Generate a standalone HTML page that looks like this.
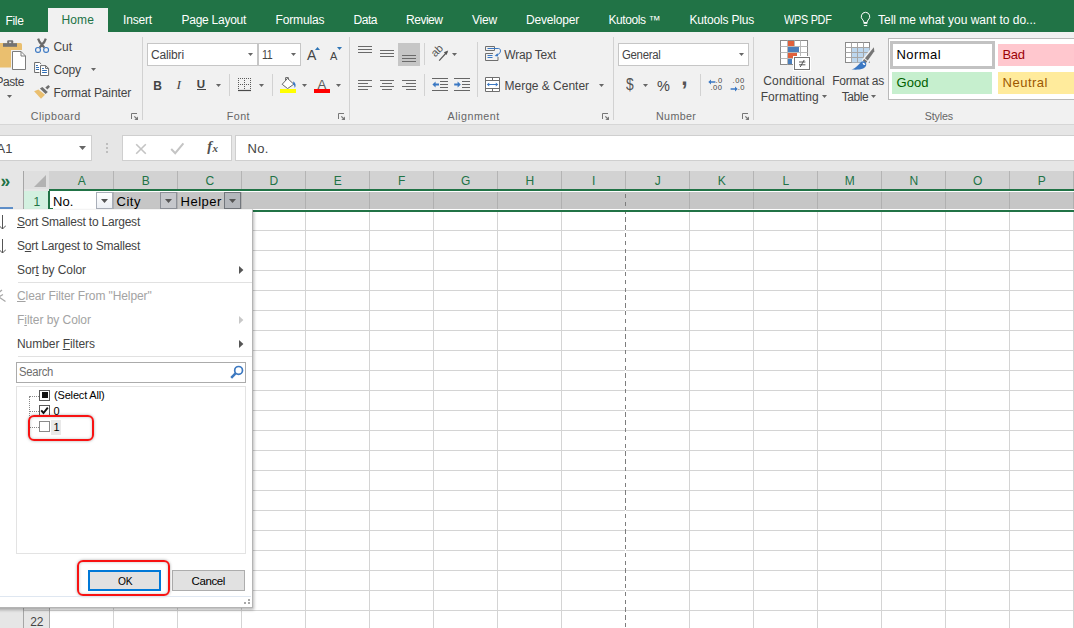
<!DOCTYPE html>
<html>
<head>
<meta charset="utf-8">
<title>Excel</title>
<style>
html,body{margin:0;padding:0;}
body{width:1074px;height:628px;overflow:hidden;position:relative;background:#fff;font-family:"Liberation Sans",sans-serif;font-size:12px;color:#444;}
.a{position:absolute;display:block;}
.t{position:absolute;white-space:nowrap;line-height:1;}
u{text-decoration:underline;text-underline-offset:1px;}

</style>
</head>
<body>
<div class="a" style="left:0px;top:0px;width:1074px;height:32px;background:#217346;"></div>
<div class="a" style="left:48px;top:8px;width:60px;height:24px;background:#f1f1f1;"></div>
<span class="t" style="left:5.5px;top:14.75px;font-size:12px;color:#fff;letter-spacing:-0.34px;">File</span>
<span class="t" style="left:61.5px;top:13.75px;font-size:12px;color:#217346;letter-spacing:0.12px;">Home</span>
<span class="t" style="left:123px;top:13.75px;font-size:12px;color:#fff;letter-spacing:-0.17px;">Insert</span>
<span class="t" style="left:181.5px;top:13.75px;font-size:12px;color:#fff;letter-spacing:-0.26px;">Page Layout</span>
<span class="t" style="left:275.5px;top:13.75px;font-size:12px;color:#fff;letter-spacing:-0.13px;">Formulas</span>
<span class="t" style="left:353.5px;top:13.75px;font-size:12px;color:#fff;letter-spacing:-0.46px;">Data</span>
<span class="t" style="left:406px;top:13.75px;font-size:12px;color:#fff;letter-spacing:-0.48px;">Review</span>
<span class="t" style="left:472px;top:13.75px;font-size:12px;color:#fff;letter-spacing:-0.2px;">View</span>
<span class="t" style="left:526px;top:13.75px;font-size:12px;color:#fff;letter-spacing:-0.19px;">Developer</span>
<span class="t" style="left:608.5px;top:13.75px;font-size:12px;color:#fff;letter-spacing:-0.43px;">Kutools ™</span>
<span class="t" style="left:689.5px;top:13.75px;font-size:12px;color:#fff;letter-spacing:-0.18px;">Kutools Plus</span>
<span class="t" style="left:783.5px;top:13.75px;font-size:12px;color:#fff;letter-spacing:-0.3px;transform:scaleX(0.904);transform-origin:0 0;">WPS PDF</span>
<span class="t" style="left:878px;top:13.75px;font-size:12px;color:#fff;">Tell me what you want to do...</span>
<svg class="a" style="left:860px;top:11px" width="11" height="16" viewBox="0 0 11 16"><path d="M5.5 1.3a4.3 4.3 0 0 0-2.7 7.6c.7.7 1 1.5 1.1 2.6h3.2c.1-1.1.4-1.9 1.1-2.6A4.3 4.3 0 0 0 5.5 1.3z" fill="none" stroke="#fff" stroke-width="1"/><path d="M3.6 12.1h3.8" stroke="#fff" stroke-width="1.5"/><path d="M3.8 14.6h3.4" stroke="#fff" stroke-width="1"/></svg>
<div class="a" style="left:0px;top:32px;width:1074px;height:92px;background:#f1f1f1;"></div>
<div class="a" style="left:0px;top:124px;width:1074px;height:1px;background:#d6d6d6;"></div>
<div class="a" style="left:142px;top:37px;width:1px;height:83px;background:#d2d2d2;"></div>
<div class="a" style="left:349px;top:37px;width:1px;height:83px;background:#d2d2d2;"></div>
<div class="a" style="left:613px;top:37px;width:1px;height:83px;background:#d2d2d2;"></div>
<div class="a" style="left:753px;top:37px;width:1px;height:83px;background:#d2d2d2;"></div>
<span class="t" style="left:30.8px;top:111.0px;font-size:10.7px;color:#666;letter-spacing:0.45px;">Clipboard</span>
<span class="t" style="left:226.8px;top:111.0px;font-size:10.7px;color:#666;letter-spacing:0.45px;">Font</span>
<span class="t" style="left:447.5px;top:111.0px;font-size:10.7px;color:#666;letter-spacing:0.53px;">Alignment</span>
<span class="t" style="left:656px;top:111.0px;font-size:10.7px;color:#666;letter-spacing:0.36px;">Number</span>
<span class="t" style="left:924.8px;top:111.0px;font-size:10.7px;color:#666;letter-spacing:-0.15px;">Styles</span>
<svg class="a" style="left:131px;top:113px" width="8" height="8" viewBox="0 0 8 8"><path d="M.5 6V.5H6" fill="none" stroke="#777" stroke-width="1"/><path d="M3.3 3.3L6 6" fill="none" stroke="#777" stroke-width="1.2"/><path d="M7 3.4V7H3.4Z" fill="#777"/></svg>
<svg class="a" style="left:338px;top:113px" width="8" height="8" viewBox="0 0 8 8"><path d="M.5 6V.5H6" fill="none" stroke="#777" stroke-width="1"/><path d="M3.3 3.3L6 6" fill="none" stroke="#777" stroke-width="1.2"/><path d="M7 3.4V7H3.4Z" fill="#777"/></svg>
<svg class="a" style="left:602px;top:113px" width="8" height="8" viewBox="0 0 8 8"><path d="M.5 6V.5H6" fill="none" stroke="#777" stroke-width="1"/><path d="M3.3 3.3L6 6" fill="none" stroke="#777" stroke-width="1.2"/><path d="M7 3.4V7H3.4Z" fill="#777"/></svg>
<svg class="a" style="left:742px;top:113px" width="8" height="8" viewBox="0 0 8 8"><path d="M.5 6V.5H6" fill="none" stroke="#777" stroke-width="1"/><path d="M3.3 3.3L6 6" fill="none" stroke="#777" stroke-width="1.2"/><path d="M7 3.4V7H3.4Z" fill="#777"/></svg>
<svg class="a" style="left:0px;top:40px" width="27" height="31" viewBox="0 0 27 31"><rect x="-3" y="3" width="25" height="24.5" rx="1.5" fill="#eabf6f"/><rect x="7.2" y="0.2" width="6" height="4" rx="1" fill="#737373"/><rect x="9.1" y="1.7" width="2.1" height="1.8" fill="#e2e2e2"/><rect x="3" y="3.2" width="14" height="3.6" fill="#737373"/><rect x="11" y="10" width="17" height="21" fill="#f1f1f1"/><path d="M12.5 11.5H21L25.5 16V29.5H12.5Z" fill="#fff" stroke="#7d7d7d" stroke-width="1"/><path d="M21 11.5V16H25.5" fill="none" stroke="#7d7d7d" stroke-width="1"/></svg>
<svg class="a" style="left:33px;top:38px" width="18" height="16" viewBox="0 0 18 16"><path d="M5.1 .6Q6.2 4.2 8.9 6.6L11.3 9.7M12.8 .6Q11.8 4.2 8.9 6.6L6.7 9.7" stroke="#6a6a6a" stroke-width="2.2" fill="none"/><circle cx="5" cy="11.9" r="2.45" fill="none" stroke="#3b78c3" stroke-width="1.15"/><circle cx="13.1" cy="11.9" r="2.45" fill="none" stroke="#3b78c3" stroke-width="1.15"/></svg>
<svg class="a" style="left:33px;top:61px" width="18" height="16" viewBox="0 0 18 16"><path d="M1.6 1.5H6.6L8.4 3.2V11.5H1.6Z" fill="#fff"/><path d="M6.4 11.5H1.6V1.5H6.6L8.2 3" fill="none" stroke="#6a6a6a" stroke-width="1"/><path d="M3 4.5H4.9M3 6.5H6M3 8.5H6" stroke="#2e6db5" stroke-width="1"/><path d="M7.5 4.6H12.6L15.6 7.4V14.5H7.5Z" fill="#fff" stroke="#6a6a6a" stroke-width="1"/><path d="M12.6 4.6V7.4H15.6" fill="none" stroke="#6a6a6a" stroke-width="1"/><path d="M9.1 7.5H10.9M9.1 9.5H13.9M9.1 11.5H13.9" stroke="#2e6db5" stroke-width="1"/></svg>
<svg class="a" style="left:33px;top:84px" width="18" height="16" viewBox="0 0 18 16"><path d="M1.1 7.2L5.4 5.6L12 10.7L8 14.7Z" fill="#eabf6f"/><path d="M6.9 4.4L9.4 2.9L14.8 7.9L12.6 9.9Z" fill="#6f6f6f"/><path d="M12.3 3.6L15.3 .9L17 2.8L14.4 5.6Z" fill="#6f6f6f"/></svg>
<span class="t" style="left:-4.5px;top:76.25px;font-size:12px;color:#444;letter-spacing:-0.44px;">Paste</span>
<svg class="a" style="left:7px;top:95px" width="5" height="3" viewBox="0 0 5 3"><path d="M0 0H5L2.5 3Z" fill="#666"/></svg>
<span class="t" style="left:53.5px;top:40.75px;font-size:12px;color:#444;letter-spacing:-0.06px;">Cut</span>
<span class="t" style="left:53.5px;top:63.75px;font-size:12px;color:#444;letter-spacing:-0.13px;">Copy</span>
<svg class="a" style="left:91px;top:68px" width="5" height="3" viewBox="0 0 5 3"><path d="M0 0H5L2.5 3Z" fill="#666"/></svg>
<span class="t" style="left:53.5px;top:86.75px;font-size:12px;color:#444;letter-spacing:-0.13px;">Format Painter</span>
<div class="a" style="left:147px;top:43px;width:111px;height:23px;background:#fff;border:1px solid #c6c6c6;box-sizing:border-box;"></div>
<div class="a" style="left:258px;top:43px;width:43px;height:23px;background:#fff;border:1px solid #c6c6c6;box-sizing:border-box;"></div>
<span class="t" style="left:151px;top:48.75px;font-size:12px;color:#444;letter-spacing:-0.15px;">Calibri</span>
<span class="t" style="left:261.5px;top:48.75px;font-size:12px;color:#444;letter-spacing:-0.3px;transform:scaleX(0.885);transform-origin:0 0;">11</span>
<svg class="a" style="left:248px;top:53px" width="5" height="3" viewBox="0 0 5 3"><path d="M0 0H5L2.5 3Z" fill="#666"/></svg>
<svg class="a" style="left:291px;top:53px" width="5" height="3" viewBox="0 0 5 3"><path d="M0 0H5L2.5 3Z" fill="#666"/></svg>
<span class="t" style="left:307px;top:47.75px;font-size:14px;color:#444;letter-spacing:0.66px;">A</span>
<span class="t" style="left:330px;top:51.0px;font-size:11px;color:#444;letter-spacing:0.16px;">A</span>
<svg class="a" style="left:315px;top:47px" width="5" height="3" viewBox="0 0 5 3"><path d="M0 3L2.5 0L5 3Z" fill="#2e75b6"/></svg>
<svg class="a" style="left:337px;top:47px" width="5" height="3" viewBox="0 0 5 3"><path d="M0 0H5L2.5 3Z" fill="#2e75b6"/></svg>
<span class="t" style="left:153.3px;top:79.5px;font-size:12px;color:#444;font-weight:bold;">B</span>
<span class="t" style="left:176.5px;top:77.5px;font-size:13.5px;color:#444;font-style:italic;font-family:&quot;Liberation Serif&quot;,serif;">I</span>
<span class="t" style="left:196.8px;top:79.0px;font-size:11.5px;color:#444;font-weight:bold;">U</span>
<div class="a" style="left:197px;top:89px;width:9px;height:1.4px;background:#444;"></div>
<svg class="a" style="left:216px;top:84px" width="5" height="3" viewBox="0 0 5 3"><path d="M0 0H5L2.5 3Z" fill="#666"/></svg>
<div class="a" style="left:229px;top:74px;width:1px;height:22px;background:#d2d2d2;"></div>
<svg class="a" style="left:259px;top:84px" width="5" height="3" viewBox="0 0 5 3"><path d="M0 0H5L2.5 3Z" fill="#666"/></svg>
<div class="a" style="left:272px;top:74px;width:1px;height:22px;background:#d2d2d2;"></div>
<svg class="a" style="left:302px;top:84px" width="5" height="3" viewBox="0 0 5 3"><path d="M0 0H5L2.5 3Z" fill="#666"/></svg>
<svg class="a" style="left:336px;top:84px" width="5" height="3" viewBox="0 0 5 3"><path d="M0 0H5L2.5 3Z" fill="#666"/></svg>
<svg class="a" style="left:237px;top:77px" width="15" height="15" viewBox="0 0 15 15"><path d="M1 1.5H14M1 7.5H14M1.5 1V13M7.5 1V13M13.5 1V13" stroke="#5a5a5a" stroke-width="1" stroke-dasharray="1 1" fill="none" shape-rendering="crispEdges"/><path d="M1 13.5H14" stroke="#4a4a4a" stroke-width="1.2"/></svg>
<svg class="a" style="left:279px;top:76px" width="18" height="14" viewBox="0 0 18 14"><path d="M8.5 2.4L14.8 8.2L8.6 12.6L3.2 8.3Z" fill="#fff" stroke="#666" stroke-width="1"/><path d="M6.6 4.6V1.6H9.4V3.4" fill="none" stroke="#666" stroke-width="1"/><path d="M14.4 5.2C16.6 7 17.4 9.4 15.8 12C15.4 10.4 15.4 9 14 8.2Z" fill="#3b78c3"/></svg>
<div class="a" style="left:280px;top:89px;width:16px;height:4px;background:#ffff00;"></div>
<div class="a" style="left:314px;top:89px;width:16px;height:4px;background:#ff0000;"></div>
<span class="t" style="left:317.5px;top:77.75px;font-size:13.2px;color:#5a5a5a;letter-spacing:0.5px;">A</span>
<div class="a" style="left:398px;top:43px;width:22px;height:23px;background:#c6c6c6;"></div>
<div class="a" style="left:358px;top:46px;width:14px;height:1px;background:#6a6a6a;"></div><div class="a" style="left:358px;top:49px;width:14px;height:1px;background:#6a6a6a;"></div><div class="a" style="left:358px;top:52px;width:14px;height:1px;background:#6a6a6a;"></div>
<div class="a" style="left:380px;top:50px;width:14px;height:1px;background:#6a6a6a;"></div><div class="a" style="left:380px;top:53px;width:14px;height:1px;background:#6a6a6a;"></div><div class="a" style="left:380px;top:56px;width:14px;height:1px;background:#6a6a6a;"></div>
<div class="a" style="left:402px;top:55px;width:14px;height:1px;background:#6a6a6a;"></div><div class="a" style="left:402px;top:58px;width:14px;height:1px;background:#6a6a6a;"></div><div class="a" style="left:402px;top:61px;width:14px;height:1px;background:#6a6a6a;"></div>
<div class="a" style="left:358px;top:80px;width:14px;height:1px;background:#6a6a6a;"></div><div class="a" style="left:358px;top:83px;width:10px;height:1px;background:#6a6a6a;"></div><div class="a" style="left:358px;top:86px;width:14px;height:1px;background:#6a6a6a;"></div><div class="a" style="left:358px;top:89px;width:10px;height:1px;background:#6a6a6a;"></div>
<div class="a" style="left:380.0px;top:80px;width:14px;height:1px;background:#6a6a6a;"></div><div class="a" style="left:382.0px;top:83px;width:10px;height:1px;background:#6a6a6a;"></div><div class="a" style="left:380.0px;top:86px;width:14px;height:1px;background:#6a6a6a;"></div><div class="a" style="left:382.0px;top:89px;width:10px;height:1px;background:#6a6a6a;"></div>
<div class="a" style="left:402px;top:80px;width:14px;height:1px;background:#6a6a6a;"></div><div class="a" style="left:406px;top:83px;width:10px;height:1px;background:#6a6a6a;"></div><div class="a" style="left:402px;top:86px;width:14px;height:1px;background:#6a6a6a;"></div><div class="a" style="left:406px;top:89px;width:10px;height:1px;background:#6a6a6a;"></div>
<div class="a" style="left:424px;top:43px;width:1px;height:22px;background:#d2d2d2;"></div>
<div class="a" style="left:424px;top:74px;width:1px;height:22px;background:#d2d2d2;"></div>
<div class="a" style="left:477px;top:42px;width:1px;height:55px;background:#d2d2d2;"></div>
<svg class="a" style="left:431px;top:44px" width="20" height="18" viewBox="0 0 20 18"><text x="0" y="0" transform="translate(4.2,13.6) rotate(-45)" font-family="Liberation Sans, sans-serif" font-size="11" fill="#555">ab</text><path d="M8.2 16.6L16 8" stroke="#555" stroke-width="1.2" fill="none"/><path d="M17.2 6.6L12.8 8.2L15.6 11Z" fill="#555"/></svg>
<svg class="a" style="left:432px;top:78px" width="16" height="13" viewBox="0 0 16 13"><path d="M0 .5H16M8 3.5H16M8 6.5H16M8 9.5H16M0 12.5H16" stroke="#666" stroke-width="1"/><path d="M0.4 6.5L3.6 3.4V5.6H7V7.4H3.6V9.6Z" fill="#3b78c3"/></svg>
<svg class="a" style="left:454px;top:78px" width="16" height="13" viewBox="0 0 16 13"><path d="M0 .5H16M8 3.5H16M8 6.5H16M8 9.5H16M0 12.5H16" stroke="#666" stroke-width="1"/><path d="M6.8 6.5L3.6 3.4V5.6H0.2V7.4H3.6V9.6Z" fill="#3b78c3"/></svg>
<svg class="a" style="left:485px;top:46px" width="17" height="16" viewBox="0 0 17 16"><path d="M.5 .5H9.5V4.5H.5Z" fill="none" stroke="#6f6f6f" stroke-width="1"/><path d="M.5 7.5H13V14.5H.5Z" fill="none" stroke="#6f6f6f" stroke-width="1"/><path d="M8 6H15V11H8Z" fill="#f1f1f1"/><path d="M2.5 2.5H13.6C15.4 2.6 15.9 4.6 15.2 6.2C14.6 7.6 13.4 8.6 11.4 9.2" stroke="#3b78c3" stroke-width="1" fill="none"/><path d="M9.6 9.9L12.6 7.2L13.2 10.6Z" fill="#3b78c3"/><path d="M2.5 9.5H7.5M2.5 11.5H7.5" stroke="#3b78c3" stroke-width="1"/></svg>
<svg class="a" style="left:485px;top:77px" width="16" height="15" viewBox="0 0 16 15"><path d="M.5 .5H14.5V14.5H.5Z" fill="#fff" stroke="#6f6f6f" stroke-width="1"/><path d="M.5 3.5H14.5M.5 11.5H14.5M7.5 .5V3.5M7.5 11.5V14.5" stroke="#6f6f6f" stroke-width="1" fill="none"/><path d="M3 7.5H12" stroke="#3b78c3" stroke-width="1"/><path d="M1.8 7.5L4.2 5.6V9.4ZM13.2 7.5L10.8 5.6V9.4Z" fill="#3b78c3"/></svg>
<svg class="a" style="left:452px;top:53px" width="5" height="3" viewBox="0 0 5 3"><path d="M0 0H5L2.5 3Z" fill="#666"/></svg>
<span class="t" style="left:504.3px;top:48.75px;font-size:12px;color:#444;letter-spacing:-0.21px;">Wrap Text</span>
<span class="t" style="left:504.6px;top:79.5px;font-size:12px;color:#444;letter-spacing:-0.02px;">Merge &amp; Center</span>
<svg class="a" style="left:599px;top:84px" width="5" height="3" viewBox="0 0 5 3"><path d="M0 0H5L2.5 3Z" fill="#666"/></svg>
<div class="a" style="left:618px;top:43px;width:131px;height:23px;background:#fff;border:1px solid #c6c6c6;box-sizing:border-box;"></div>
<span class="t" style="left:622px;top:48.75px;font-size:12px;color:#444;letter-spacing:-0.3px;transform:scaleX(0.948);transform-origin:0 0;">General</span>
<svg class="a" style="left:739px;top:53px" width="5" height="3" viewBox="0 0 5 3"><path d="M0 0H5L2.5 3Z" fill="#666"/></svg>
<span class="t" style="left:626px;top:76.25px;font-size:16.5px;color:#555;transform:scaleX(.84);transform-origin:0 0;">$</span>
<svg class="a" style="left:642.8px;top:84px" width="5" height="3" viewBox="0 0 5 3"><path d="M0 0H5L2.5 3Z" fill="#666"/></svg>
<span class="t" style="left:657px;top:78.75px;font-size:14.5px;color:#444;letter-spacing:0.09px;">%</span>
<span class="t" style="left:681.3px;top:65.75px;font-size:23px;color:#555;font-weight:bold;">,</span>
<div class="a" style="left:700px;top:74px;width:1px;height:22px;background:#d2d2d2;"></div>
<svg class="a" style="left:707.5px;top:79px" width="8" height="6" viewBox="0 0 8 6"><path d="M.3 3L3 .4V2.3H7.4V3.7H3V5.6Z" fill="#3b78c3"/></svg>
<span class="t" style="left:715.6px;top:77.25px;font-size:7.6px;color:#444;letter-spacing:0.33px;">.0</span>
<span class="t" style="left:710.4px;top:84.25px;font-size:7.6px;color:#444;letter-spacing:0.55px;">.00</span>
<span class="t" style="left:732.6px;top:77.25px;font-size:7.6px;color:#444;letter-spacing:0.55px;">.00</span>
<svg class="a" style="left:730px;top:86px" width="8" height="6" viewBox="0 0 8 6"><path d="M7.7 3L5 .4V2.3H.6V3.7H5V5.6Z" fill="#3b78c3"/></svg>
<span class="t" style="left:737.8px;top:84.25px;font-size:7.6px;color:#444;letter-spacing:0.33px;">.0</span>
<svg class="a" style="left:780px;top:40px" width="31" height="31" viewBox="0 0 31 31"><rect x=".5" y=".5" width="27" height="24" fill="#fff" stroke="#8a8a8a"/><path d="M7.5 .5V24.5M14.5 .5V24.5M20.5 .5V24.5M.5 6.5H27.5M.5 12.5H27.5M.5 18.5H27.5" stroke="#b8b8b8" stroke-width="1" fill="none"/><rect x="8" y="1" width="6" height="5" fill="#e0603c"/><rect x="8" y="7" width="11" height="5" fill="#4a7ebb"/><rect x="8" y="13" width="9" height="5" fill="#e0603c"/><rect x="8" y="19" width="4" height="5" fill="#4a7ebb"/><rect x="13.5" y="16.5" width="17" height="14" fill="#fff" stroke="#fff" stroke-width="1"/><rect x="14.5" y="17.5" width="15" height="12" fill="#fff" stroke="#777" stroke-width="1"/><path d="M19 22H25.4M19 24.8H25.4M24.2 20L20.2 27" stroke="#444" stroke-width=".9" fill="none"/></svg>
<svg class="a" style="left:845px;top:41px" width="31" height="30" viewBox="0 0 31 30"><rect x=".5" y="1.5" width="24" height="20" fill="#fff" stroke="#8a8a8a"/><rect x="7" y="7" width="17.5" height="14.5" fill="#bdd7ee"/><path d="M6.5 1.5V21.5M12.5 1.5V21.5M18.5 1.5V21.5M.5 6.5H24.5M.5 11.5H24.5M.5 16.5H24.5" stroke="#a6a6a6" stroke-width="1" fill="none"/><path d="M17.6 19.2L27.8 6.4L30 5.4L30.2 10.6L22.4 21.8L19 24Z" fill="#f1f1f1" stroke="#f1f1f1" stroke-width="1.6"/><path d="M28.9 6.2L29.3 10.2L22.8 19.4L19.9 17.2Z" fill="#767676"/><path d="M19.2 17.9L22.2 20.2L20.8 22.2L17.8 19.8Z" fill="#767676"/><path d="M6.4 28.6C11 27.4 13.4 23.4 15.8 21.2C17.4 19.8 19.6 20 20.8 21.6C22 23.4 21.2 26.2 18.2 27.6C14.8 29 10 28.8 6.4 28.6Z" fill="#3b78c3"/><path d="M17.4 21.8C19 21.4 20.2 22.4 20.2 24L18.4 23.8Z" fill="#fff"/></svg>
<span class="t" style="left:763.3px;top:74.5px;font-size:12px;color:#444;letter-spacing:0.13px;">Conditional</span>
<span class="t" style="left:760.7px;top:90.75px;font-size:12px;color:#444;letter-spacing:0.07px;">Formatting</span>
<svg class="a" style="left:822.2px;top:94.6px" width="5" height="3" viewBox="0 0 5 3"><path d="M0 0H5L2.5 3Z" fill="#666"/></svg>
<span class="t" style="left:832.3px;top:74.5px;font-size:12px;color:#444;letter-spacing:-0.26px;">Format as</span>
<span class="t" style="left:841.7px;top:90.75px;font-size:12px;color:#444;letter-spacing:-0.44px;">Table</span>
<svg class="a" style="left:871px;top:94.6px" width="5" height="3" viewBox="0 0 5 3"><path d="M0 0H5L2.5 3Z" fill="#666"/></svg>
<div class="a" style="left:888px;top:38px;width:190px;height:62px;background:#fff;border:1px solid #b9b9b9;box-sizing:border-box;"></div>
<div class="a" style="left:890px;top:41px;width:105px;height:28px;background:#fff;border:3px solid #c2c2c2;box-sizing:border-box;"></div>
<div class="a" style="left:998px;top:44px;width:80px;height:22px;background:#ffc7ce;"></div>
<div class="a" style="left:892px;top:72px;width:100px;height:22px;background:#c6efce;"></div>
<div class="a" style="left:998px;top:72px;width:80px;height:22px;background:#ffeb9c;"></div>
<span class="t" style="left:896.5px;top:48.0px;font-size:13px;color:#000;letter-spacing:0.43px;">Normal</span>
<span class="t" style="left:1002.5px;top:48.0px;font-size:13px;color:#9c0006;letter-spacing:-0.38px;">Bad</span>
<span class="t" style="left:896.5px;top:75.5px;font-size:13px;color:#006100;letter-spacing:0.05px;">Good</span>
<span class="t" style="left:1002.5px;top:75.5px;font-size:13px;color:#9c5700;letter-spacing:0.51px;">Neutral</span>
<div class="a" style="left:0px;top:125px;width:1074px;height:46px;background:#e6e6e6;"></div>
<div class="a" style="left:-5px;top:135px;width:97px;height:26px;background:#fff;border:1px solid #cfcfcf;box-sizing:border-box;"></div>
<div class="a" style="left:122px;top:135px;width:110px;height:26px;background:#fff;border:1px solid #cfcfcf;box-sizing:border-box;"></div>
<div class="a" style="left:235px;top:135px;width:845px;height:26px;background:#fff;border:1px solid #cfcfcf;box-sizing:border-box;"></div>
<span class="t" style="left:-3.5px;top:142.25px;font-size:13px;color:#444;letter-spacing:0.05px;">A1</span>
<svg class="a" style="left:78.5px;top:145.5px" width="7" height="4" viewBox="0 0 7 4"><path d="M0 0H7L3.5 4Z" fill="#666"/></svg>
<div class="a" style="left:106px;top:142.5px;width:2px;height:2px;background:#b0b0b0;border-radius:1px;"></div>
<div class="a" style="left:106px;top:146.5px;width:2px;height:2px;background:#b0b0b0;border-radius:1px;"></div>
<div class="a" style="left:106px;top:150.5px;width:2px;height:2px;background:#b0b0b0;border-radius:1px;"></div>
<svg class="a" style="left:135px;top:142.5px" width="12" height="12" viewBox="0 0 12 12"><path d="M1.2 1.2l9.6 9.6M10.8 1.2l-9.6 9.6" stroke="#c4c4c4" stroke-width="1.6" fill="none"/></svg>
<svg class="a" style="left:170px;top:142px" width="15" height="13" viewBox="0 0 15 13"><path d="M1.2 7l4 4.2L13.4 1.4" stroke="#c4c4c4" stroke-width="2" fill="none"/></svg>
<span class="t" style="left:207.3px;top:139.0px;font-size:14.5px;color:#505050;font-style:italic;font-weight:bold;font-family:&quot;Liberation Serif&quot;,serif;">f</span>
<span class="t" style="left:212.6px;top:143.25px;font-size:11px;color:#505050;font-style:italic;font-weight:bold;font-family:&quot;Liberation Serif&quot;,serif;">x</span>
<span class="t" style="left:247.5px;top:142.25px;font-size:13px;color:#444;letter-spacing:0.26px;">No.</span>
<div class="a" style="left:0px;top:171px;width:24px;height:457px;background:#e6e6e6;"></div>
<span class="t" style="left:0.5px;top:172.75px;font-size:17.5px;color:#217346;font-weight:bold;">»</span>
<div class="a" style="left:23px;top:171px;width:1px;height:457px;background:#a6a6a6;"></div>
<div class="a" style="left:24px;top:171px;width:25px;height:20px;background:#dfdfdf;"></div>
<div class="a" style="left:49px;top:171px;width:1025px;height:18px;background:#d2d2d2;"></div>
<svg class="a" style="left:34px;top:175px" width="12" height="12" viewBox="0 0 12 12"><path d="M12 0V12H0Z" fill="#b2b2b2"/></svg>
<span class="t" style="left:49.75px;top:174.5px;width:64px;text-align:center;font-size:12px;color:#217346;">A</span>
<div class="a" style="left:113px;top:171px;width:1px;height:18px;background:#b4b4b4;"></div>
<span class="t" style="left:113.75px;top:174.5px;width:64px;text-align:center;font-size:12px;color:#217346;">B</span>
<div class="a" style="left:177px;top:171px;width:1px;height:18px;background:#b4b4b4;"></div>
<span class="t" style="left:177.75px;top:174.5px;width:64px;text-align:center;font-size:12px;color:#217346;">C</span>
<div class="a" style="left:241px;top:171px;width:1px;height:18px;background:#b4b4b4;"></div>
<span class="t" style="left:241.75px;top:174.5px;width:64px;text-align:center;font-size:12px;color:#217346;">D</span>
<div class="a" style="left:305px;top:171px;width:1px;height:18px;background:#b4b4b4;"></div>
<span class="t" style="left:305.75px;top:174.5px;width:64px;text-align:center;font-size:12px;color:#217346;">E</span>
<div class="a" style="left:369px;top:171px;width:1px;height:18px;background:#b4b4b4;"></div>
<span class="t" style="left:369.75px;top:174.5px;width:64px;text-align:center;font-size:12px;color:#217346;">F</span>
<div class="a" style="left:433px;top:171px;width:1px;height:18px;background:#b4b4b4;"></div>
<span class="t" style="left:433.75px;top:174.5px;width:64px;text-align:center;font-size:12px;color:#217346;">G</span>
<div class="a" style="left:497px;top:171px;width:1px;height:18px;background:#b4b4b4;"></div>
<span class="t" style="left:497.75px;top:174.5px;width:64px;text-align:center;font-size:12px;color:#217346;">H</span>
<div class="a" style="left:561px;top:171px;width:1px;height:18px;background:#b4b4b4;"></div>
<span class="t" style="left:561.75px;top:174.5px;width:64px;text-align:center;font-size:12px;color:#217346;">I</span>
<div class="a" style="left:625px;top:171px;width:1px;height:18px;background:#b4b4b4;"></div>
<span class="t" style="left:625.75px;top:174.5px;width:64px;text-align:center;font-size:12px;color:#217346;">J</span>
<div class="a" style="left:689px;top:171px;width:1px;height:18px;background:#b4b4b4;"></div>
<span class="t" style="left:689.75px;top:174.5px;width:64px;text-align:center;font-size:12px;color:#217346;">K</span>
<div class="a" style="left:753px;top:171px;width:1px;height:18px;background:#b4b4b4;"></div>
<span class="t" style="left:753.75px;top:174.5px;width:64px;text-align:center;font-size:12px;color:#217346;">L</span>
<div class="a" style="left:817px;top:171px;width:1px;height:18px;background:#b4b4b4;"></div>
<span class="t" style="left:817.75px;top:174.5px;width:64px;text-align:center;font-size:12px;color:#217346;">M</span>
<div class="a" style="left:881px;top:171px;width:1px;height:18px;background:#b4b4b4;"></div>
<span class="t" style="left:881.75px;top:174.5px;width:64px;text-align:center;font-size:12px;color:#217346;">N</span>
<div class="a" style="left:945px;top:171px;width:1px;height:18px;background:#b4b4b4;"></div>
<span class="t" style="left:945.75px;top:174.5px;width:64px;text-align:center;font-size:12px;color:#217346;">O</span>
<div class="a" style="left:1009px;top:171px;width:1px;height:18px;background:#b4b4b4;"></div>
<span class="t" style="left:1009.75px;top:174.5px;width:64px;text-align:center;font-size:12px;color:#217346;">P</span>
<div class="a" style="left:1073px;top:171px;width:1px;height:18px;background:#b4b4b4;"></div>
<div class="a" style="left:24px;top:189px;width:25px;height:439px;background:#e6e6e6;"></div>
<div class="a" style="left:49px;top:189px;width:1025px;height:2px;background:#217346;"></div>
<div class="a" style="left:24px;top:191px;width:25px;height:19px;background:#d3f0e0;"></div>
<div class="a" style="left:49px;top:191px;width:1025px;height:1px;background:#fff;"></div>
<div class="a" style="left:49px;top:192px;width:1025px;height:17px;background:#c6c6c6;"></div>
<div class="a" style="left:49px;top:209px;width:1025px;height:1px;background:#fff;"></div>
<div class="a" style="left:49px;top:210px;width:1025px;height:2px;background:#217346;"></div>
<div class="a" style="left:113px;top:192px;width:1px;height:17px;background:#b0b0b0;"></div>
<div class="a" style="left:177px;top:192px;width:1px;height:17px;background:#b0b0b0;"></div>
<div class="a" style="left:241px;top:192px;width:1px;height:17px;background:#b0b0b0;"></div>
<div class="a" style="left:305px;top:192px;width:1px;height:17px;background:#b0b0b0;"></div>
<div class="a" style="left:369px;top:192px;width:1px;height:17px;background:#b0b0b0;"></div>
<div class="a" style="left:433px;top:192px;width:1px;height:17px;background:#b0b0b0;"></div>
<div class="a" style="left:497px;top:192px;width:1px;height:17px;background:#b0b0b0;"></div>
<div class="a" style="left:561px;top:192px;width:1px;height:17px;background:#b0b0b0;"></div>
<div class="a" style="left:625px;top:192px;width:1px;height:17px;background:#b0b0b0;"></div>
<div class="a" style="left:689px;top:192px;width:1px;height:17px;background:#b0b0b0;"></div>
<div class="a" style="left:753px;top:192px;width:1px;height:17px;background:#b0b0b0;"></div>
<div class="a" style="left:817px;top:192px;width:1px;height:17px;background:#b0b0b0;"></div>
<div class="a" style="left:881px;top:192px;width:1px;height:17px;background:#b0b0b0;"></div>
<div class="a" style="left:945px;top:192px;width:1px;height:17px;background:#b0b0b0;"></div>
<div class="a" style="left:1009px;top:192px;width:1px;height:17px;background:#b0b0b0;"></div>
<div class="a" style="left:1073px;top:192px;width:1px;height:17px;background:#b0b0b0;"></div>
<div class="a" style="left:49px;top:212px;width:1025px;height:416px;background:#fff;"></div>
<div class="a" style="left:113px;top:212px;width:1px;height:416px;background:#d4d4d4;"></div>
<div class="a" style="left:177px;top:212px;width:1px;height:416px;background:#d4d4d4;"></div>
<div class="a" style="left:241px;top:212px;width:1px;height:416px;background:#d4d4d4;"></div>
<div class="a" style="left:305px;top:212px;width:1px;height:416px;background:#d4d4d4;"></div>
<div class="a" style="left:369px;top:212px;width:1px;height:416px;background:#d4d4d4;"></div>
<div class="a" style="left:433px;top:212px;width:1px;height:416px;background:#d4d4d4;"></div>
<div class="a" style="left:497px;top:212px;width:1px;height:416px;background:#d4d4d4;"></div>
<div class="a" style="left:561px;top:212px;width:1px;height:416px;background:#d4d4d4;"></div>
<div class="a" style="left:625px;top:212px;width:1px;height:416px;background:#d4d4d4;"></div>
<div class="a" style="left:689px;top:212px;width:1px;height:416px;background:#d4d4d4;"></div>
<div class="a" style="left:753px;top:212px;width:1px;height:416px;background:#d4d4d4;"></div>
<div class="a" style="left:817px;top:212px;width:1px;height:416px;background:#d4d4d4;"></div>
<div class="a" style="left:881px;top:212px;width:1px;height:416px;background:#d4d4d4;"></div>
<div class="a" style="left:945px;top:212px;width:1px;height:416px;background:#d4d4d4;"></div>
<div class="a" style="left:1009px;top:212px;width:1px;height:416px;background:#d4d4d4;"></div>
<div class="a" style="left:1073px;top:212px;width:1px;height:416px;background:#d4d4d4;"></div>
<div class="a" style="left:49px;top:230px;width:1025px;height:1px;background:#d4d4d4;"></div>
<div class="a" style="left:24px;top:230px;width:25px;height:1px;background:#c8c8c8;"></div>
<div class="a" style="left:49px;top:250px;width:1025px;height:1px;background:#d4d4d4;"></div>
<div class="a" style="left:24px;top:250px;width:25px;height:1px;background:#c8c8c8;"></div>
<div class="a" style="left:49px;top:270px;width:1025px;height:1px;background:#d4d4d4;"></div>
<div class="a" style="left:24px;top:270px;width:25px;height:1px;background:#c8c8c8;"></div>
<div class="a" style="left:49px;top:290px;width:1025px;height:1px;background:#d4d4d4;"></div>
<div class="a" style="left:24px;top:290px;width:25px;height:1px;background:#c8c8c8;"></div>
<div class="a" style="left:49px;top:310px;width:1025px;height:1px;background:#d4d4d4;"></div>
<div class="a" style="left:24px;top:310px;width:25px;height:1px;background:#c8c8c8;"></div>
<div class="a" style="left:49px;top:330px;width:1025px;height:1px;background:#d4d4d4;"></div>
<div class="a" style="left:24px;top:330px;width:25px;height:1px;background:#c8c8c8;"></div>
<div class="a" style="left:49px;top:350px;width:1025px;height:1px;background:#d4d4d4;"></div>
<div class="a" style="left:24px;top:350px;width:25px;height:1px;background:#c8c8c8;"></div>
<div class="a" style="left:49px;top:370px;width:1025px;height:1px;background:#d4d4d4;"></div>
<div class="a" style="left:24px;top:370px;width:25px;height:1px;background:#c8c8c8;"></div>
<div class="a" style="left:49px;top:390px;width:1025px;height:1px;background:#d4d4d4;"></div>
<div class="a" style="left:24px;top:390px;width:25px;height:1px;background:#c8c8c8;"></div>
<div class="a" style="left:49px;top:410px;width:1025px;height:1px;background:#d4d4d4;"></div>
<div class="a" style="left:24px;top:410px;width:25px;height:1px;background:#c8c8c8;"></div>
<div class="a" style="left:49px;top:430px;width:1025px;height:1px;background:#d4d4d4;"></div>
<div class="a" style="left:24px;top:430px;width:25px;height:1px;background:#c8c8c8;"></div>
<div class="a" style="left:49px;top:450px;width:1025px;height:1px;background:#d4d4d4;"></div>
<div class="a" style="left:24px;top:450px;width:25px;height:1px;background:#c8c8c8;"></div>
<div class="a" style="left:49px;top:470px;width:1025px;height:1px;background:#d4d4d4;"></div>
<div class="a" style="left:24px;top:470px;width:25px;height:1px;background:#c8c8c8;"></div>
<div class="a" style="left:49px;top:490px;width:1025px;height:1px;background:#d4d4d4;"></div>
<div class="a" style="left:24px;top:490px;width:25px;height:1px;background:#c8c8c8;"></div>
<div class="a" style="left:49px;top:510px;width:1025px;height:1px;background:#d4d4d4;"></div>
<div class="a" style="left:24px;top:510px;width:25px;height:1px;background:#c8c8c8;"></div>
<div class="a" style="left:49px;top:530px;width:1025px;height:1px;background:#d4d4d4;"></div>
<div class="a" style="left:24px;top:530px;width:25px;height:1px;background:#c8c8c8;"></div>
<div class="a" style="left:49px;top:550px;width:1025px;height:1px;background:#d4d4d4;"></div>
<div class="a" style="left:24px;top:550px;width:25px;height:1px;background:#c8c8c8;"></div>
<div class="a" style="left:49px;top:570px;width:1025px;height:1px;background:#d4d4d4;"></div>
<div class="a" style="left:24px;top:570px;width:25px;height:1px;background:#c8c8c8;"></div>
<div class="a" style="left:49px;top:590px;width:1025px;height:1px;background:#d4d4d4;"></div>
<div class="a" style="left:24px;top:590px;width:25px;height:1px;background:#c8c8c8;"></div>
<div class="a" style="left:49px;top:610px;width:1025px;height:1px;background:#d4d4d4;"></div>
<div class="a" style="left:24px;top:610px;width:25px;height:1px;background:#c8c8c8;"></div>
<div class="a" style="left:49px;top:212px;width:1px;height:416px;background:#ababab;"></div>
<div class="a" style="left:625px;top:192px;width:1px;height:17px;background:#c6c6c6;"></div>
<div class="a" style="left:625px;top:212px;width:1px;height:416px;background:#fff;"></div>
<div class="a" style="left:625px;top:194px;width:1px;height:434px;background:repeating-linear-gradient(to bottom,#7d7d7d 0,#7d7d7d 4.4px,transparent 4.4px,transparent 7.8px);"></div>
<div class="a" style="left:625px;top:209px;width:1px;height:1px;background:#fff;"></div>
<div class="a" style="left:625px;top:210px;width:1px;height:2px;background:#217346;"></div>
<div class="a" style="left:50px;top:192px;width:63px;height:18px;background:#fff;"></div>
<div class="a" style="left:48px;top:191px;width:2px;height:20px;background:#217346;"></div>
<span class="t" style="left:33.5px;top:195.75px;font-size:12px;color:#217346;">1</span>
<span class="t" style="left:30.3px;top:616.25px;font-size:12px;color:#444;letter-spacing:-0.18px;">22</span>
<span class="t" style="left:53px;top:195.0px;font-size:13px;color:#000;letter-spacing:0.09px;">No.</span>
<span class="t" style="left:116.5px;top:195.0px;font-size:13px;color:#000;letter-spacing:0.53px;">City</span>
<span class="t" style="left:180.5px;top:195.0px;font-size:13px;color:#000;letter-spacing:0.53px;">Helper</span>
<div class="a" style="left:96px;top:192px;width:17px;height:17px;background:linear-gradient(#ffffff,#edf0f5);border:1px solid #a9afb9;box-sizing:border-box;"></div><svg class="a" style="left:101px;top:199.3px" width="7" height="4" viewBox="0 0 7 4"><path d="M0 0H7L3.5 4Z" fill="#555"/></svg>
<div class="a" style="left:160px;top:192px;width:17px;height:17px;background:#c5c7cb;border:1px solid #8d9198;box-sizing:border-box;"></div><svg class="a" style="left:165px;top:199.3px" width="7" height="4" viewBox="0 0 7 4"><path d="M0 0H7L3.5 4Z" fill="#555"/></svg>
<div class="a" style="left:224px;top:192px;width:17px;height:17px;background:#b4b7bc;border:1px solid #72767c;box-sizing:border-box;"></div><svg class="a" style="left:229px;top:199.3px" width="7" height="4" viewBox="0 0 7 4"><path d="M0 0H7L3.5 4Z" fill="#555"/></svg>
<div class="a" style="left:0px;top:206.5px;width:12.5px;height:2.5px;background:#5f8fc9;"></div>
<div class="a" style="left:48px;top:207.6px;width:5.4px;height:1.4px;background:#217346;"></div>
<div class="a" style="left:-5px;top:209px;width:258px;height:399px;background:#fff;border:1px solid #b4b4b4;border-top-color:#f4f4f4;box-sizing:border-box;box-shadow:1px 2px 3px rgba(0,0,0,0.28);"></div>
<svg class="a" style="left:0px;top:214.5px" width="6" height="15" viewBox="0 0 6 15"><path d="M2.5 0V14M-1 10.5L2.5 14L6 10.5" stroke="#555" stroke-width="1" fill="none"/></svg>
<svg class="a" style="left:0px;top:238.5px" width="6" height="15" viewBox="0 0 6 15"><path d="M2.5 0V14M-1 10.5L2.5 14L6 10.5" stroke="#555" stroke-width="1" fill="none"/></svg>
<svg class="a" style="left:0px;top:289px" width="6" height="15" viewBox="0 0 6 15"><path d="M-1 3.5L2 1M-1 8L5.5 12.5M-2 8.5L3 5.5" stroke="#a8a8a8" stroke-width="1.3" fill="none"/></svg>
<span class="t" style="left:17px;top:215.75px;font-size:12px;color:#444;letter-spacing:-0.21px;"><u>S</u>ort Smallest to Largest</span>
<span class="t" style="left:17px;top:239.75px;font-size:12px;color:#444;letter-spacing:-0.21px;">S<u>o</u>rt Largest to Smallest</span>
<span class="t" style="left:17px;top:263.75px;font-size:12px;color:#444;letter-spacing:-0.08px;">Sor<u>t</u> by Color</span>
<svg class="a" style="left:238.8px;top:265.5px" width="5" height="8" viewBox="0 0 5 8"><path d="M0 0L4.4 4L0 8Z" fill="#555"/></svg>
<div class="a" style="left:17.5px;top:282px;width:234px;height:1px;background:#e1e1e1;"></div>
<span class="t" style="left:17px;top:289.75px;font-size:12px;color:#a3a3a3;letter-spacing:-0.1px;"><u>C</u>lear Filter From "Helper"</span>
<span class="t" style="left:17px;top:313.75px;font-size:12px;color:#a3a3a3;letter-spacing:-0.05px;">F<u>i</u>lter by Color</span>
<svg class="a" style="left:238.8px;top:315.5px" width="5" height="8" viewBox="0 0 5 8"><path d="M0 0L4.4 4L0 8Z" fill="#c8c8c8"/></svg>
<span class="t" style="left:17px;top:337.75px;font-size:12px;color:#444;letter-spacing:-0.05px;">Number <u>F</u>ilters</span>
<svg class="a" style="left:238.8px;top:339.5px" width="5" height="8" viewBox="0 0 5 8"><path d="M0 0L4.4 4L0 8Z" fill="#555"/></svg>
<div class="a" style="left:17.5px;top:356px;width:234px;height:1px;background:#e1e1e1;"></div>
<div class="a" style="left:16px;top:362px;width:230px;height:21px;background:#fff;border:1px solid #ababab;box-sizing:border-box;"></div>
<span class="t" style="left:18.5px;top:366.25px;font-size:12px;color:#6d6d6d;letter-spacing:-0.3px;transform:scaleX(0.938);transform-origin:0 0;">Search</span>
<svg class="a" style="left:230px;top:365px" width="14" height="14" viewBox="0 0 14 14"><circle cx="8.6" cy="5.4" r="3.9" fill="none" stroke="#3c78c0" stroke-width="1.7"/><path d="M5.8 8.2L1.2 12.8" stroke="#3c78c0" stroke-width="2.5"/></svg>
<div class="a" style="left:16px;top:386px;width:230px;height:168px;background:#fff;border:1px solid #e3e3e3;box-sizing:border-box;"></div>
<div class="a" style="left:39px;top:389.5px;width:11px;height:11px;background:#fff;border:1px solid #5a5a5a;box-sizing:border-box;"></div><div class="a" style="left:41.5px;top:392.0px;width:6px;height:6px;background:#111;"></div>
<div class="a" style="left:39px;top:405px;width:11px;height:11px;background:#fff;border:1px solid #5a5a5a;box-sizing:border-box;"></div><svg class="a" style="left:40px;top:406px" width="9" height="9" viewBox="0 0 9 9"><path d="M1.2 4.4l2.3 2.6L7.8 1.6" stroke="#111" stroke-width="1.9" fill="none"/></svg>
<div class="a" style="left:51px;top:419.5px;width:10px;height:15px;background:#e9e9e9;"></div>
<div class="a" style="left:39px;top:421px;width:11px;height:11px;background:#fff;border:1px solid #8a8a8a;box-sizing:border-box;"></div>
<span class="t" style="left:54px;top:389.75px;font-size:11px;color:#000;letter-spacing:-0.17px;">(Select All)</span>
<span class="t" style="left:53.6px;top:405.75px;font-size:11px;color:#000;">0</span>
<span class="t" style="left:53.6px;top:421.75px;font-size:11px;color:#000;">1</span>
<div class="a" style="left:29px;top:396px;width:0;height:32px;border-left:1px dotted #888;"></div>
<div class="a" style="left:29px;top:396px;width:10px;height:0;border-top:1px dotted #888;"></div>
<div class="a" style="left:29px;top:411px;width:10px;height:0;border-top:1px dotted #888;"></div>
<div class="a" style="left:29px;top:427px;width:10px;height:0;border-top:1px dotted #888;"></div>
<div class="a" style="left:88px;top:570px;width:73px;height:21px;background:#e1e1e1;border:2px solid #0078d7;box-sizing:border-box;"></div>
<div class="a" style="left:172px;top:570px;width:73px;height:21px;background:#e1e1e1;border:1px solid #adadad;box-sizing:border-box;"></div>
<span class="t" style="left:117.7px;top:576.25px;font-size:11.5px;color:#000;letter-spacing:-0.3px;transform:scaleX(0.892);transform-origin:0 0;">OK</span>
<span class="t" style="left:191.5px;top:576.25px;font-size:11.5px;color:#000;letter-spacing:-0.39px;">Cancel</span>
<div class="a" style="left:27.5px;top:415.2px;width:66px;height:25.8px;background:transparent;border:2px solid #f81212;border-radius:6px;box-sizing:border-box;box-shadow:0 0 3px rgba(0,0,0,.35),inset 0 0 3px rgba(0,0,0,.25);"></div>
<div class="a" style="left:76.5px;top:559.5px;width:93px;height:36px;background:transparent;border:2px solid #f81212;border-radius:6px;box-sizing:border-box;box-shadow:0 0 3px rgba(0,0,0,.35),inset 0 0 3px rgba(0,0,0,.25);"></div>
<div class="a" style="left:0px;top:596px;width:251px;height:1px;background:#dfe7f1;"></div>
<div class="a" style="left:243.5px;top:602px;width:2px;height:2px;background:#a8a8a8;"></div>
<div class="a" style="left:247.5px;top:602px;width:2px;height:2px;background:#a8a8a8;"></div>
<div class="a" style="left:247.5px;top:598.5px;width:2px;height:2px;background:#a8a8a8;"></div>
</body>
</html>
